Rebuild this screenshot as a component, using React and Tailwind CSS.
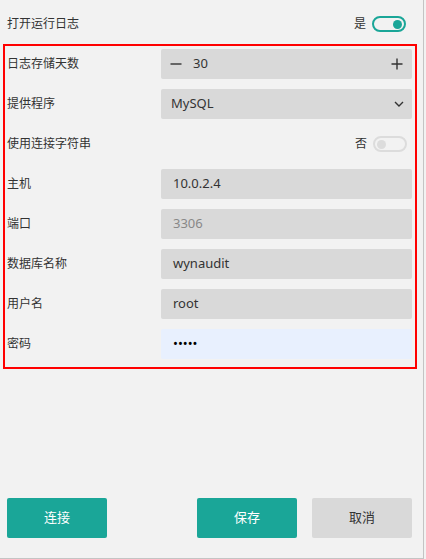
import React from 'react';

const font = { fontFamily: '"Noto Sans", "Noto Sans CJK SC", sans-serif' };

const Toggle = ({ on }) =>
  on ? (
    <div className="w-[34px] h-[16px] rounded-full border-2 border-[#1aa698] flex items-center justify-end pr-[2px]">
      <div className="w-[9px] h-[9px] rounded-full bg-[#1aa698]" />
    </div>
  ) : (
    <div className="w-[34px] h-[16px] rounded-full border-2 border-[#dcdcdc] flex items-center pl-[2px]">
      <div className="w-[9px] h-[9px] rounded-full bg-[#dcdcdc]" />
    </div>
  );

const Row = ({ label, children }) => (
  <div className="flex items-center h-[30px]">
    <div className="w-[154px] text-[12px] text-[#333]">{label}</div>
    <div className="flex-1 h-full">{children}</div>
  </div>
);

const TextBox = ({ value, muted, filled }) => (
  <div
    className={
      'h-full rounded-[2px] flex items-center pl-[12px] text-[13px] ' +
      (filled ? 'bg-[#e8f0fe] text-black' : 'bg-[#d9d9d9] ') +
      (muted ? 'text-[#888]' : filled ? '' : 'text-[#333]')
    }
  >
    {value}
  </div>
);

export default function App() {
  return (
    <div style={font} className="w-[426px] h-[559px] bg-[#f2f2f2]">
      <div className="w-[424px] h-[559px] border-r border-b border-[#c4c4c4] flex flex-col">
        <div className="flex items-center h-[30px] mt-[9px] mb-[5px] pl-[7px] pr-[17px]">
          <span className="text-[12px] text-[#333]">打开运行日志</span>
          <span className="ml-auto text-[12px] text-[#333] mr-[6px]">是</span>
          <Toggle on />
        </div>

        <div className="ml-[3px] w-[414px] border-2 border-[#ff0000] pt-[3px] pb-[8px] pl-[2px] pr-[3px] flex flex-col gap-[10px]">
          <Row label="日志存储天数">
            <div className="h-full rounded-[2px] bg-[#d9d9d9] flex items-center px-[9px] text-[13px] text-[#333]">
              <svg width="12" height="12" viewBox="0 0 12 12">
                <path d="M0.5 6h11" stroke="#333" strokeWidth="1.4" />
              </svg>
              <span className="ml-[11px]">30</span>
              <svg className="ml-auto" width="12" height="12" viewBox="0 0 12 12">
                <path d="M0.5 6h11M6 0.5v11" stroke="#333" strokeWidth="1.4" />
              </svg>
            </div>
          </Row>
          <Row label="提供程序">
            <div className="h-full rounded-[2px] bg-[#d9d9d9] flex items-center pl-[10px] pr-[8px] text-[13px] text-[#333]">
              <span>MySQL</span>
              <svg className="ml-auto" width="10" height="6" viewBox="0 0 10 6">
                <path d="M1 1l4 4 4-4" fill="none" stroke="#333" strokeWidth="1.4" />
              </svg>
            </div>
          </Row>
          <Row label="使用连接字符串">
            <div className="h-full flex items-center justify-end pr-[5px]">
              <span className="text-[12px] text-[#333] mr-[6px]">否</span>
              <Toggle />
            </div>
          </Row>
          <Row label="主机">
            <TextBox value="10.0.2.4" />
          </Row>
          <Row label="端口">
            <TextBox value="3306" muted />
          </Row>
          <Row label="数据库名称">
            <TextBox value="wynaudit" />
          </Row>
          <Row label="用户名">
            <TextBox value="root" />
          </Row>
          <Row label="密码">
            <TextBox value="•••••" filled />
          </Row>
        </div>

        <div className="mt-auto mb-[20px] flex items-center pl-[7px] pr-[11px] h-[40px]">
          <button className="w-[100px] h-[40px] rounded-[2px] bg-[#1aa698] text-white text-[13px]">连接</button>
          <button className="ml-auto w-[100px] h-[40px] rounded-[2px] bg-[#1aa698] text-white text-[13px]">保存</button>
          <button className="ml-[15px] w-[100px] h-[40px] rounded-[2px] bg-[#d9d9d9] text-[#333] text-[13px]">取消</button>
        </div>
      </div>
    </div>
  );
}
